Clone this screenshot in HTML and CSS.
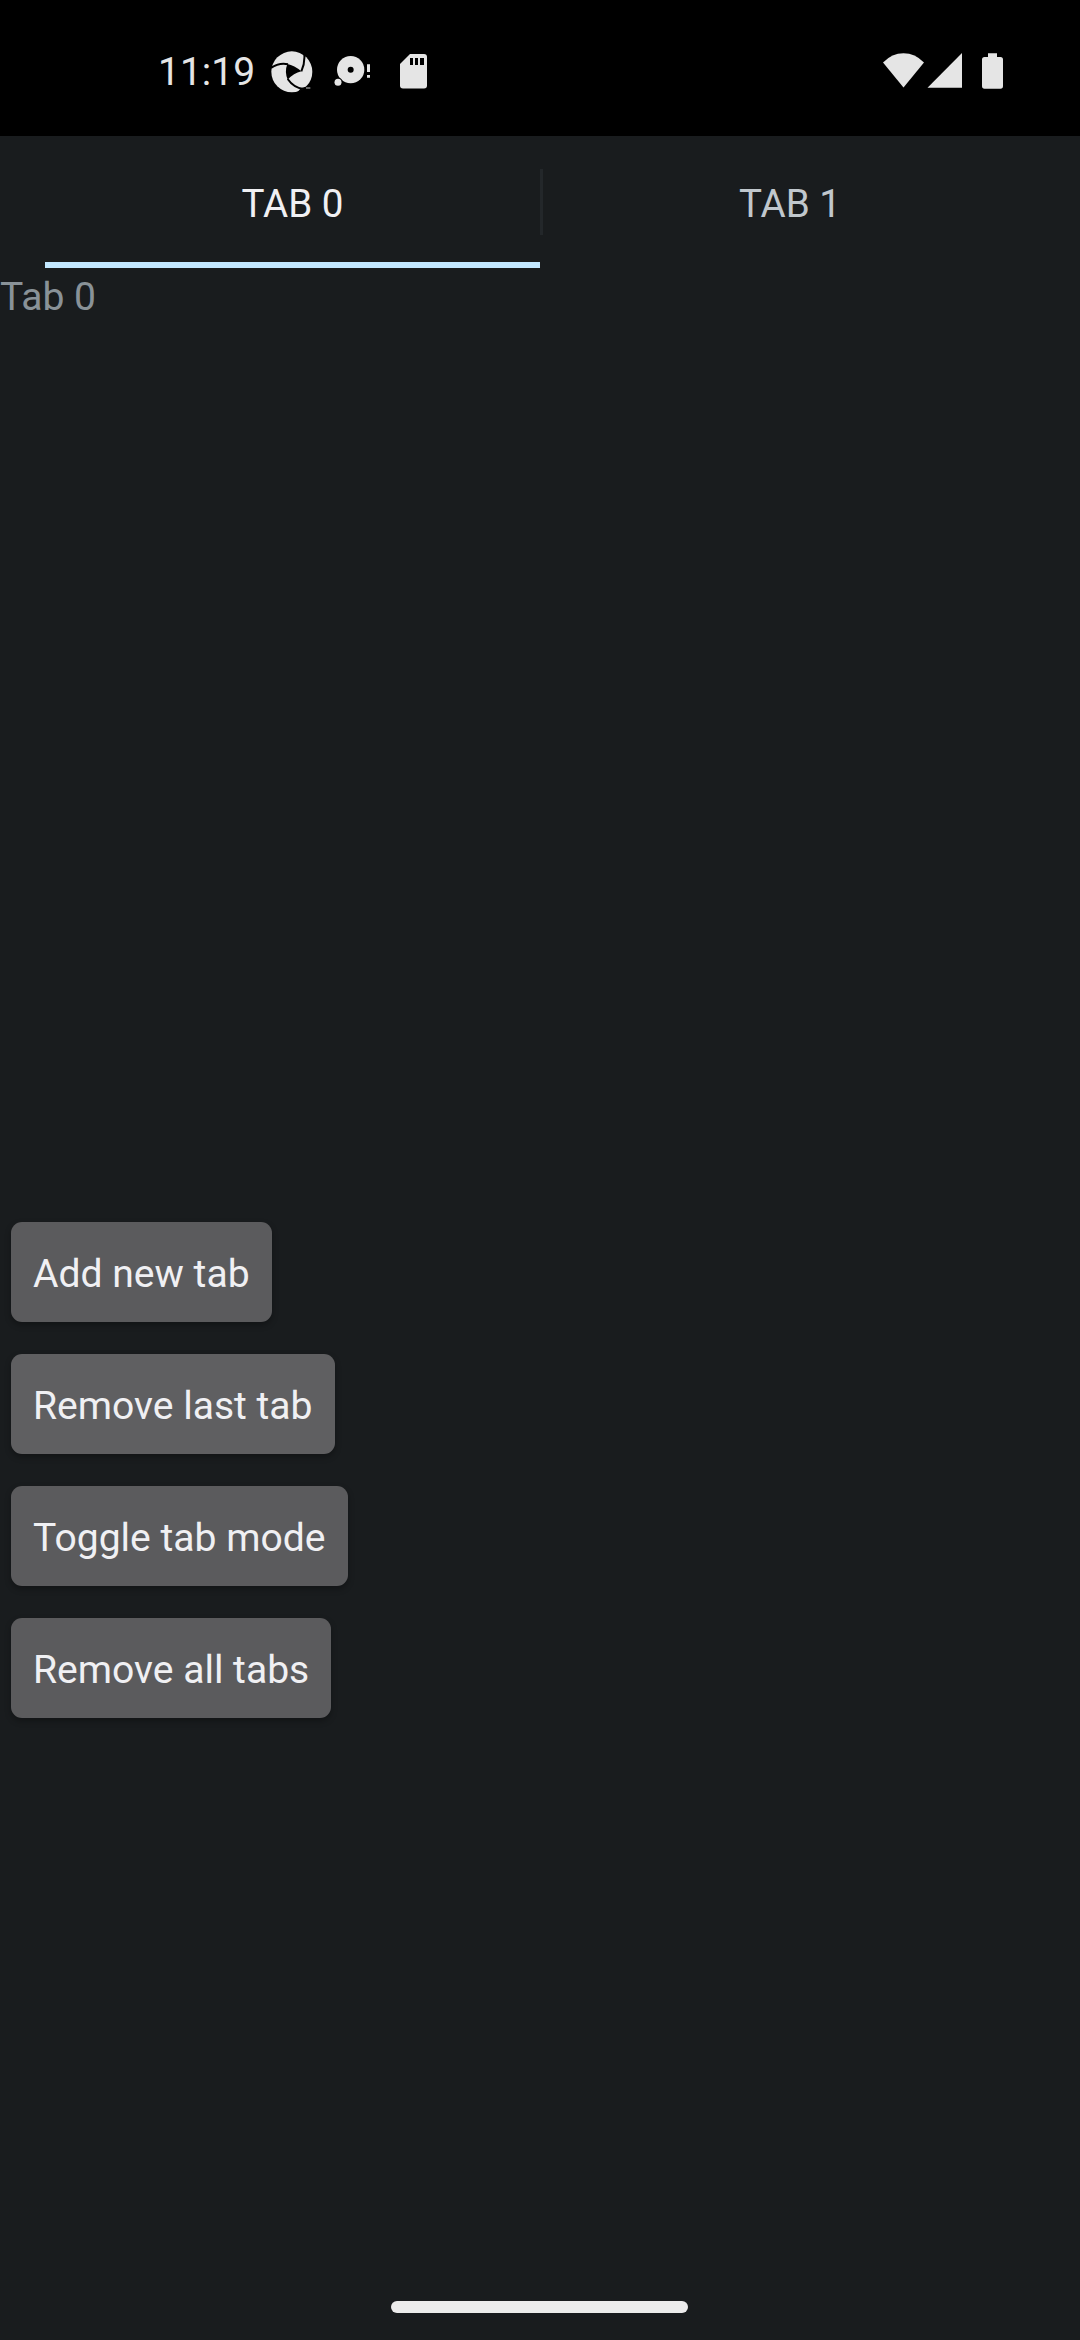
FILE: index.html
```html
<!DOCTYPE html>
<html lang="en">
<head>
<meta charset="utf-8">
<title>Tabs</title>
<link rel="stylesheet" href="styles.css">
</head>
<body>
<div class="screen">
  <header class="status">
    <div class="status-left">
      <span class="clock">11:19</span>
      <svg class="lens" width="42" height="42" viewBox="0 0 126 126">
        <circle cx="62.500" cy="62.500" r="61.500" fill="#e5e5e5"/>
        <path d="M49 39Q70 43 91 61Q68 67 50 86Q40 62 49 39Z" fill="#000"/>
        <path d="M0 51Q25 34 51 40M99 0Q104 33 91 61M50 84Q68 110 97 114" fill="none" stroke="#000" stroke-width="6"/>
        <path d="M80 126L92 113L110 108" fill="none" stroke="#000" stroke-width="5"/>
        <path d="M105 111h13" stroke="#999" stroke-width="4"/>
      </svg>
      <svg class="disc" width="38" height="32" viewBox="0 0 114 96">
        <circle cx="50" cy="44" r="41" fill="#e5e5e5"/>
        <circle cx="50" cy="44" r="9" fill="#000"/>
        <circle cx="12" cy="82" r="14" fill="#000"/>
        <circle cx="12" cy="82" r="10.500" fill="#e5e5e5"/>
        <path d="M99 28h9v23h-9zM99 60h9v8h-9z" fill="#e5e5e5"/>
      </svg>
      <svg class="card" width="27" height="35" viewBox="0 0 27 35">
        <path d="M10 0H24Q27 0 27 3V31.500Q27 34.500 24 34.500H3Q0 34.500 0 31.500V10Z" fill="#e5e5e5"/>
        <path d="M10 4h3v7h-3zM15 4h3v7h-3zM20 4h4v7h-4z" fill="#000"/>
      </svg>
    </div>
    <svg class="signals" width="120" height="36" viewBox="0 0 120 36" fill="#e5e5e5">
      <path d="M0 9.500Q9 .300 20.500 .300T41 9.500L20.500 34.500Z"/>
      <path d="M79 0V34.700H44.500Z"/>
      <path d="M105 .300h9V4h3.500Q120 4 120 6.500V33Q120 35.700 117.500 35.700H101.500Q99 35.700 99 33V6.500Q99 4 101.500 4H105Z"/>
    </svg>
  </header>
  <nav class="tabs">
    <div class="tab active">TAB 0</div>
    <div class="tab">TAB 1</div>
  </nav>
  <p class="content">Tab 0</p>
  <main class="actions">
    <button class="btn">Add new tab</button>
    <button class="btn light">Remove last tab</button>
    <button class="btn">Toggle tab mode</button>
    <button class="btn">Remove all tabs</button>
  </main>
  <footer class="nav"><div class="handle"></div></footer>
</div>
</body>
</html>
```
FILE: styles.css
```css
* { box-sizing: border-box; }
body { margin: 0; font-family: Roboto, sans-serif; font-size: 39.1px; }
.screen { width: 1080px; height: 2340px; background: #191c1e; display: flex; flex-direction: column; overflow: hidden; }
.status { height: 136px; flex: none; background: #000; display: flex; justify-content: space-between; padding: 0 77px 0 158px; }
.status-left { display: flex; align-items: flex-start; }
.clock { width: 113px; margin-top: 49px; line-height: 46px; font-size: 39px; color: #e5e5e5; }
.status svg { flex: none; }
.lens { margin-top: 51px; }
.disc { margin: 55px 0 0 21px; }
.card { margin: 54px 0 0 28px; }
.status .signals { margin: 53px 0 0; }
.tabs { height: 132px; flex: none; display: flex; padding: 0 45px; }
.tab { flex: 0 0 495px; display: flex; align-items: center; justify-content: center; border-bottom: 6px solid transparent; color: #c0c7cd; font-size: 38.6px; line-height: 46px; padding-top: 9px; }
.tab.active { border-color: #c2e8ff; color: #f0f0f3; }
.tab + .tab { padding-left: 5px; background: linear-gradient(#23272a, #23272a) 0 33px / 3px 66px no-repeat; }
.content { margin: 6px 0 0; line-height: 46px; color: #899298; height: 948px; flex: none; }
.actions { display: flex; flex-direction: column; align-items: flex-start; gap: 32px; padding-left: 11px; }
.btn { height: 100px; border: 0; border-radius: 11px; background: #5b5b5d; color: #f0f0f3; font: inherit; line-height: 46px; padding: 4px 22px 0; box-shadow: 0 3px 6px rgba(0, 0, 0, .3); }
.btn.light { background: #5f5f61; }
.nav { margin-top: auto; padding: 0 0 27px 391px; }
.handle { width: 297px; height: 12px; border-radius: 6px; background: #ececec; }
```
